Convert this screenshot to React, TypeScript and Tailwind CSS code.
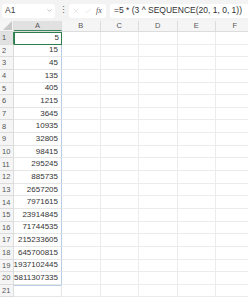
import { ChevronDown, X, Check } from "lucide-react";

const values = [
  5, 15, 45, 135, 405, 1215, 3645, 10935, 32805, 98415, 295245, 885735, 2657205,
  7971615, 23914845, 71744535, 215233605, 645700815, 1937102445, 5811307335,
];

const cols = ["B", "C", "D", "E", "F"];

export default function App() {
  const rows = Array.from({ length: 21 }, (_, i) => i + 1);

  return (
    <div
      className="w-[248px] h-[300px] overflow-hidden bg-white text-[#333]"
      style={{ fontFamily: '"Liberation Sans", "Noto Sans CJK JP", sans-serif' }}
    >
      {/* Formula bar */}
      <div className="flex items-center h-[21px] bg-[#f3f3f3] pl-[2px] gap-[4px]">
        <div className="flex items-center justify-between w-[53px] shrink-0 h-[14px] bg-white rounded-[3px] pl-[3px] pr-[2px]">
          <span className="text-[8.5px] leading-none text-[#444]">A1</span>
          <ChevronDown size={7} strokeWidth={1.5} className="text-[#777]" />
        </div>
        <span className="text-[9px] leading-none text-[#666] w-[6px] shrink-0 text-center">⋮</span>
        <div className="flex items-center gap-[4px] w-[37px] shrink-0 h-[14px] bg-white rounded-[3px] px-[3px]">
          <X size={8} strokeWidth={1} className="text-[#bbb]" />
          <Check size={8} strokeWidth={1} className="text-[#bbb]" />
          <span
            className="text-[8px] italic leading-none text-[#555]"
            style={{ fontFamily: '"Liberation Serif", serif' }}
          >
            fx
          </span>
        </div>
        <div className="flex items-center flex-1 min-w-0 h-[14px] bg-white rounded-l-[3px] pl-[4px] overflow-hidden">
          <span className="text-[8.5px] leading-none whitespace-nowrap text-[#333]">
            =5 * (3 ^ SEQUENCE(20, 1, 0, 1))
          </span>
        </div>
      </div>

      {/* Column headers */}
      <div className="flex h-[11px] bg-[#f5f5f5] border-b border-[#dcdcdc]">
        <div className="relative w-[14px] shrink-0 border-r border-[#dcdcdc]">
          <div className="absolute right-[1px] bottom-[1px] w-0 h-0 border-l-[9px] border-l-transparent border-b-[9px] border-b-[#c8c8c8]" />
        </div>
        <div className="flex items-center justify-center w-[48px] shrink-0 bg-[#e1e1e1] border-r border-[#dcdcdc] border-b border-b-[#3a8a5c] text-[7.5px] text-[#555]">
          A
        </div>
        {cols.map((c) => (
          <div
            key={c}
            className="flex items-center justify-center w-[38.5px] shrink-0 border-r border-[#dcdcdc] text-[7.5px] text-[#555]"
          >
            {c}
          </div>
        ))}
      </div>

      {/* Rows */}
      <div className="flex flex-col">
        {rows.map((r) => {
          const v = values[r - 1];
          const sel = r === 1;
          return (
            <div key={r} className="flex h-[12.65px] shrink-0">
              <div
                className={
                  sel
                    ? "flex items-center w-[14px] shrink-0 pl-[2px] bg-[#e1e1e1] border-r border-r-[#3a8a5c] border-b border-[#dcdcdc] text-[7.5px] text-[#555]"
                    : "flex items-center w-[14px] shrink-0 pl-[2px] bg-[#f5f5f5] border-r border-b border-[#dcdcdc] text-[7.5px] text-[#555]"
                }
              >
                {r}
              </div>
              <div
                className={
                  sel
                    ? "flex items-center justify-end w-[48px] shrink-0 pr-[2px] border-[1.5px] border-[#2e7d4f] text-[8px] text-[#333]"
                    : r <= 20
                    ? "flex items-center justify-end w-[48px] shrink-0 pr-[3px] border-r border-r-[#b9cde6] border-b border-b-[#e6e6e6] text-[8px] text-[#333]"
                    : "flex items-center justify-end w-[48px] shrink-0 pr-[3px] border-r border-b border-[#e6e6e6] border-t border-t-[#b9cde6] text-[8px] text-[#333]"
                }
              >
                {v ?? ""}
              </div>
              {cols.map((c) => (
                <div
                  key={c}
                  className="w-[38.5px] shrink-0 border-r border-b border-[#ececec]"
                />
              ))}
            </div>
          );
        })}
      </div>
    </div>
  );
}
